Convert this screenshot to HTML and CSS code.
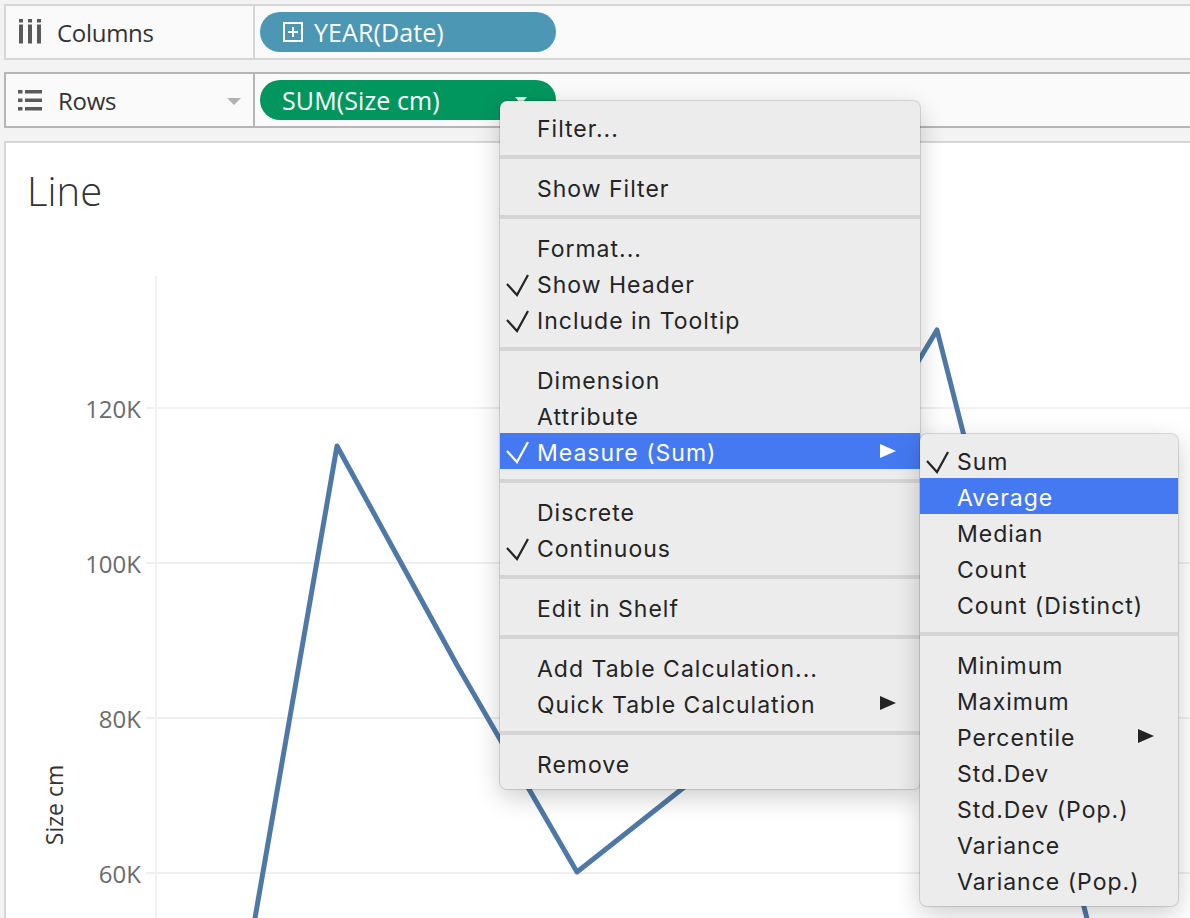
FILE: index.html
```html
<!DOCTYPE html>
<html>
<head>
<meta charset="utf-8">
<title>Line</title>
<link rel="stylesheet" href="styles.css">
</head>
<body>
<div class="app">
  <div class="shelf shelf-cols">
    <div class="shelf-label">
      <svg class="shelf-icon" width="24" height="26" viewBox="0 0 24 26">
        <rect x="1" y="0" width="4" height="3.5"/><rect x="1" y="5.5" width="4" height="19"/>
        <rect x="10" y="0" width="4" height="3.5"/><rect x="10" y="5.5" width="4" height="19"/>
        <rect x="19" y="0" width="4" height="3.5"/><rect x="19" y="5.5" width="4" height="19"/>
      </svg>
      <span class="shelf-name">Columns</span>
    </div>
    <div class="shelf-body">
      <div class="pill pill-dim">
        <svg class="plus" width="20" height="20" viewBox="0 0 20 20">
          <rect x="1" y="1" width="18" height="18" fill="none" stroke="#fff" stroke-width="2"/>
          <line x1="10" y1="5" x2="10" y2="15" stroke="#fff" stroke-width="2"/>
          <line x1="5" y1="10" x2="15" y2="10" stroke="#fff" stroke-width="2"/>
        </svg>
        <span class="pill-text">YEAR(Date)</span>
      </div>
    </div>
  </div>
  <div class="shelf shelf-rows">
    <div class="shelf-label">
      <svg class="shelf-icon" width="25" height="22" viewBox="0 0 25 22">
        <rect x="0" y="1" width="4.5" height="3.5"/><rect x="7" y="1" width="17" height="3.5"/>
        <rect x="0" y="9.5" width="4.5" height="3.5"/><rect x="7" y="9.5" width="17" height="3.5"/>
        <rect x="0" y="18" width="4.5" height="3.5"/><rect x="7" y="18" width="17" height="3.5"/>
      </svg>
      <span class="shelf-name">Rows</span>
      <span class="caret"></span>
    </div>
    <div class="shelf-body">
      <div class="pill pill-measure">
        <span class="pill-text">SUM(Size cm)</span>
        <span class="pill-caret"></span>
      </div>
    </div>
  </div>
  <div class="pane">
    <div class="pane-title">Line</div>
    <svg class="chart" width="1184" height="658" viewBox="0 0 1184 658">
      <line x1="150" y1="16" x2="150" y2="658" class="axis"/>
      <line x1="140" y1="148" x2="1184" y2="148" class="grid"/>
      <line x1="140" y1="303" x2="1184" y2="303" class="grid"/>
      <line x1="140" y1="458" x2="1184" y2="458" class="grid"/>
      <line x1="140" y1="613" x2="1184" y2="613" class="grid"/>
      <text x="135" y="158" class="tick">120K</text>
      <text x="135" y="313" class="tick">100K</text>
      <text x="135" y="468" class="tick">80K</text>
      <text x="135" y="623" class="tick">60K</text>
      <text x="48" y="545" class="axis-title" transform="rotate(-90 48 545)">Size cm</text>
      <polyline class="series" points="211,877 331,186 451,405 571,612 691,517 811,270 931,70 1089,690"/>
    </svg>
  </div>
</div>

<div class="menu main-menu">
  <div class="mi"><span class="gut"></span><span class="t">Filter...</span></div>
  <div class="sep"></div>
  <div class="mi"><span class="gut"></span><span class="t">Show Filter</span></div>
  <div class="sep"></div>
  <div class="mi"><span class="gut"></span><span class="t">Format...</span></div>
  <div class="mi"><span class="gut"><svg width="37" height="36" viewBox="0 0 37 36"><polyline points="7,19 17,30 28,10" class="ck"/></svg></span><span class="t">Show Header</span></div>
  <div class="mi"><span class="gut"><svg width="37" height="36" viewBox="0 0 37 36"><polyline points="7,19 17,30 28,10" class="ck"/></svg></span><span class="t">Include in Tooltip</span></div>
  <div class="sep"></div>
  <div class="mi"><span class="gut"></span><span class="t">Dimension</span></div>
  <div class="mi"><span class="gut"></span><span class="t">Attribute</span></div>
  <div class="mi active"><span class="gut"><svg width="37" height="36" viewBox="0 0 37 36"><polyline points="7,18 17,29 28,9" class="ck"/></svg></span><span class="t">Measure (Sum)</span><span class="arrow"></span></div>
  <div class="sep"></div>
  <div class="mi"><span class="gut"></span><span class="t">Discrete</span></div>
  <div class="mi"><span class="gut"><svg width="37" height="36" viewBox="0 0 37 36"><polyline points="7,19 17,30 28,10" class="ck"/></svg></span><span class="t">Continuous</span></div>
  <div class="sep"></div>
  <div class="mi"><span class="gut"></span><span class="t">Edit in Shelf</span></div>
  <div class="sep"></div>
  <div class="mi"><span class="gut"></span><span class="t">Add Table Calculation...</span></div>
  <div class="mi"><span class="gut"></span><span class="t">Quick Table Calculation</span><span class="arrow"></span></div>
  <div class="sep"></div>
  <div class="mi"><span class="gut"></span><span class="t">Remove</span></div>
</div>

<div class="menu sub-menu">
  <div class="mi"><span class="gut"><svg width="37" height="36" viewBox="0 0 37 36"><polyline points="7,19 17,30 28,10" class="ck"/></svg></span><span class="t">Sum</span></div>
  <div class="mi active"><span class="gut"></span><span class="t">Average</span></div>
  <div class="mi"><span class="gut"></span><span class="t">Median</span></div>
  <div class="mi"><span class="gut"></span><span class="t">Count</span></div>
  <div class="mi"><span class="gut"></span><span class="t">Count (Distinct)</span></div>
  <div class="sep"></div>
  <div class="mi"><span class="gut"></span><span class="t">Minimum</span></div>
  <div class="mi"><span class="gut"></span><span class="t">Maximum</span></div>
  <div class="mi"><span class="gut"></span><span class="t">Percentile</span><span class="arrow"></span></div>
  <div class="mi"><span class="gut"></span><span class="t">Std.Dev</span></div>
  <div class="mi"><span class="gut"></span><span class="t">Std.Dev (Pop.)</span></div>
  <div class="mi"><span class="gut"></span><span class="t">Variance</span></div>
  <div class="mi"><span class="gut"></span><span class="t">Variance (Pop.)</span></div>
</div>
</body>
</html>
```

FILE: styles.css
```css
* { box-sizing: border-box; margin: 0; padding: 0; }
html, body { width: 100%; height: 100%; overflow: hidden; }
body {
  background: #f3f3f3;
  font-family: "Open Sans", "Liberation Sans", sans-serif;
  color: #333;
  position: relative;
}
.app {
  padding: 4px 0 0 4px;
  display: flex;
  flex-direction: column;
  height: 100%;
}
.shelf {
  display: flex;
  height: 56px;
  flex: none;
  border: 2px solid #d6d6d6;
  border-right: none;
  background: #fafafa;
}
.shelf-rows {
  margin-top: 12px;
  border-color: #b6b6b6;
}
.shelf-label {
  width: 249px;
  flex: none;
  display: flex;
  align-items: center;
  padding-left: 12px;
  padding-right: 12px;
  border-right: 2px solid #d6d6d6;
}
.shelf-rows .shelf-label { border-right-color: #b6b6b6; }
.shelf-icon { fill: #5a5a5a; flex: none; margin-right: 15px; }
.shelf-cols .shelf-icon { margin-top: -1px; }
.shelf-name { font-size: 24px; color: #333; letter-spacing: -0.3px; }
.caret {
  margin-left: auto;
  width: 0; height: 0;
  border-top: 7px solid #b2b2b2;
  border-left: 7px solid transparent;
  border-right: 7px solid transparent;
  margin-top: 2px;
}
.shelf-body {
  flex: 1;
  display: flex;
  align-items: center;
  padding-left: 5px;
}
.pill {
  width: 296px;
  height: 40px;
  border-radius: 20px;
  display: flex;
  align-items: center;
  color: #fff;
  font-size: 25px;
  letter-spacing: 0.1px;
}
.pill-dim { background: #4b97b4; padding-left: 23px; }
.pill-dim .plus { margin-right: 11px; }
.pill-measure { background: #02965f; padding-left: 22px; }
.pill-caret {
  margin-left: auto;
  margin-right: 29px;
  width: 0; height: 0;
  border-top: 7px solid #e4f2ec;
  border-left: 6px solid transparent;
  border-right: 6px solid transparent;
}
.pane {
  margin-top: 13px;
  flex: 1;
  border-top: 2px solid #d6d6d6;
  border-left: 2px solid #d6d6d6;
  background: #fff;
  display: flex;
  flex-direction: column;
  overflow: hidden;
}
.pane-title {
  height: 117px;
  flex: none;
  padding: 28px 0 0 21px;
  font-size: 40px;
  line-height: 40px;
  font-weight: 300;
  color: #333;
}
.chart { display: block; flex: none; }
.chart .axis { stroke: #ececec; stroke-width: 1.5; }
.chart .grid { stroke: #efefef; stroke-width: 2; }
.chart .tick {
  font-family: "Open Sans", sans-serif;
  font-size: 24px;
  fill: #6b6b6b;
  text-anchor: end;
}
.chart .axis-title {
  font-family: "Open Sans", sans-serif;
  font-size: 23px;
  fill: #333;
  text-anchor: middle;
  dominant-baseline: central;
}
.chart .series {
  fill: none;
  stroke: #4e79a7;
  stroke-width: 5;
  stroke-linejoin: round;
}

/* context menus */
.menu {
  position: absolute;
  background: #ececec;
  border-radius: 7px;
  padding: 8px 0;
  box-shadow: 0 0 0 1px rgba(0,0,0,0.13), 0 8px 26px rgba(0,0,0,0.2);
  font-family: "Inter", "Noto Sans", sans-serif;
  font-size: 23px;
  color: #242424;
}
.main-menu { left: 500px; top: 101px; width: 420px; }
.sub-menu { left: 920px; top: 434px; width: 258px; }
.mi {
  height: 36px;
  display: flex;
  align-items: center;
  white-space: nowrap;
  letter-spacing: 1px;
}
.mi .t { position: relative; top: 2px; }
.mi.active { background: #4479f1; color: #fff; }
.gut { width: 37px; height: 36px; flex: none; display: block; }
.gut svg { display: block; }
.ck { fill: none; stroke: currentColor; stroke-width: 2.2; }
.arrow {
  margin-left: auto;
  margin-right: 24px;
  width: 0; height: 0;
  border-left: 16px solid currentColor;
  border-top: 7px solid transparent;
  border-bottom: 7px solid transparent;
}
.sep {
  height: 4px;
  margin: 10px 0;
  background: #d5d5d5;
}
```
